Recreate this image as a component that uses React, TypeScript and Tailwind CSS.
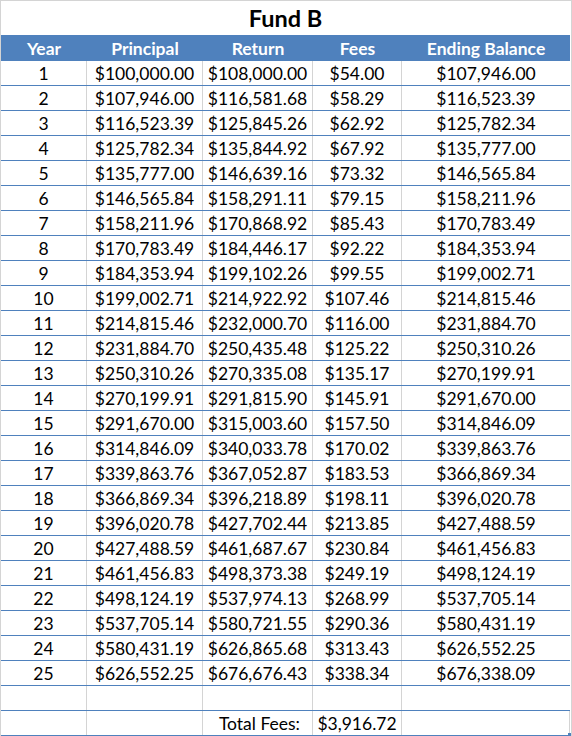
const rows = [
  ['1', '$100,000.00', '$108,000.00', '$54.00', '$107,946.00'],
  ['2', '$107,946.00', '$116,581.68', '$58.29', '$116,523.39'],
  ['3', '$116,523.39', '$125,845.26', '$62.92', '$125,782.34'],
  ['4', '$125,782.34', '$135,844.92', '$67.92', '$135,777.00'],
  ['5', '$135,777.00', '$146,639.16', '$73.32', '$146,565.84'],
  ['6', '$146,565.84', '$158,291.11', '$79.15', '$158,211.96'],
  ['7', '$158,211.96', '$170,868.92', '$85.43', '$170,783.49'],
  ['8', '$170,783.49', '$184,446.17', '$92.22', '$184,353.94'],
  ['9', '$184,353.94', '$199,102.26', '$99.55', '$199,002.71'],
  ['10', '$199,002.71', '$214,922.92', '$107.46', '$214,815.46'],
  ['11', '$214,815.46', '$232,000.70', '$116.00', '$231,884.70'],
  ['12', '$231,884.70', '$250,435.48', '$125.22', '$250,310.26'],
  ['13', '$250,310.26', '$270,335.08', '$135.17', '$270,199.91'],
  ['14', '$270,199.91', '$291,815.90', '$145.91', '$291,670.00'],
  ['15', '$291,670.00', '$315,003.60', '$157.50', '$314,846.09'],
  ['16', '$314,846.09', '$340,033.78', '$170.02', '$339,863.76'],
  ['17', '$339,863.76', '$367,052.87', '$183.53', '$366,869.34'],
  ['18', '$366,869.34', '$396,218.89', '$198.11', '$396,020.78'],
  ['19', '$396,020.78', '$427,702.44', '$213.85', '$427,488.59'],
  ['20', '$427,488.59', '$461,687.67', '$230.84', '$461,456.83'],
  ['21', '$461,456.83', '$498,373.38', '$249.19', '$498,124.19'],
  ['22', '$498,124.19', '$537,974.13', '$268.99', '$537,705.14'],
  ['23', '$537,705.14', '$580,721.55', '$290.36', '$580,431.19'],
  ['24', '$580,431.19', '$626,865.68', '$313.43', '$626,552.25'],
  ['25', '$626,552.25', '$676,676.43', '$338.34', '$676,338.09'],
]

const headers = ['Year', 'Principal', 'Return', 'Fees', 'Ending Balance']

const cols = 'grid grid-cols-[86px_116px_110px_89px_168px]'
const cell = 'flex items-center justify-center pt-px border-r border-[#d4d4d4] last:border-r-0'

function Row({ cells }: { cells: string[] }) {
  return (
    <div className={`${cols} h-[25px] border-b border-[#4f81bd]`}>
      {cells.map((c, i) => <div key={i} className={cell}>{c}</div>)}
    </div>
  )
}

export default function App() {
  return (
    <div className="w-[572px] h-[736px] bg-white border-x border-t border-[#d4d4d4] pr-px text-[17.5px] leading-none text-black overflow-hidden"
      style={{ fontFamily: 'Lato, "Open Sans", sans-serif' }}>
      <div className="h-[34px] flex items-center justify-center pt-px text-[23.5px] font-bold">Fund B</div>
      <div className={`${cols} h-[26px] bg-[#4f81bd] text-white font-bold`}>
        {headers.map(h => <div key={h} className="flex items-center justify-center pt-px">{h}</div>)}
      </div>
      {rows.map(r => <Row key={r[0]} cells={r} />)}
      <Row cells={['', '', '', '', '']} />
      <div className={`${cols} h-[25px] border-b border-[#4f81bd] relative`}>
        <div className={cell}></div>
        <div className={cell}></div>
        <div className={`${cell} justify-end pr-3`}>Total Fees:</div>
        <div className={cell}>$3,916.72</div>
        <div className={cell}></div>
        <div className="absolute right-[-1px] bottom-[-1px] w-[3px] h-[3px] bg-[#4f81bd]"></div>
      </div>
    </div>
  )
}
